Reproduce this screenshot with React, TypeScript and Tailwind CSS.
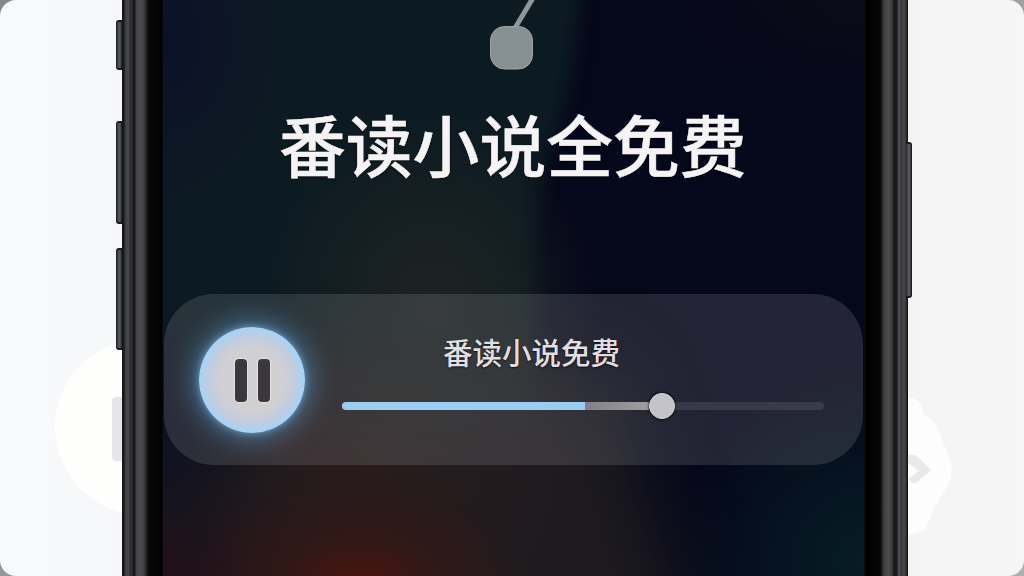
const CJK = "font-['Noto_Sans_CJK_SC','Noto_Sans',sans-serif]";

function SideButton({ className, right }: { className: string; right?: boolean }) {
  return (
    <div
      className={`w-[6px] shrink-0 border-y-2 border-[#17191c] ${
        right
          ? 'rounded-r-[3px] bg-[linear-gradient(90deg,#29292b,#626265_50%,#3a3a3d_75%,#111113)]'
          : 'rounded-l-[3px] bg-[linear-gradient(90deg,#15181b,#4a5055_40%,#55595d_65%,#1c1e20)]'
      } ${className}`}
    />
  );
}

function LeftSide() {
  return (
    <div className="relative flex h-full w-[122px] shrink-0 flex-col items-end">
      <svg className="absolute inset-0" width="122" height="576" viewBox="0 0 122 576">
        <circle cx="143" cy="427" r="88" fill="#fefefd" />
        <rect x="112" y="397" width="24" height="64" rx="4" fill="#e5e6e7" />
      </svg>
      <div className="relative flex flex-col items-end pt-5">
        <SideButton className="h-[50px]" />
        <SideButton className="mt-[51px] h-[103px]" />
        <SideButton className="mt-[24px] h-[102px]" />
      </div>
    </div>
  );
}

function RightSide() {
  return (
    <div className="relative flex h-full flex-1 flex-col items-start">
      <svg className="absolute inset-0" width="116" height="576" viewBox="908 0 116 576">
        <path
          d="M908 397 Q918 399 921 405 L923 413 Q933 419 938 429 L951 462 Q953 472 950 482 L937 503 L925 530 Q919 533 908 535Z"
          fill="#fdfdfd"
        />
        <path d="M908 455 Q914 454 918 457 L931 470 L916 483 Q911 485 909 478 L919 471 L908 463Z" fill="#e9e9ea" />
      </svg>
      <SideButton right className="relative -ml-[2px] mt-[142px] h-[156px]" />
    </div>
  );
}

function Player() {
  return (
    <div className="flex h-[171px] w-[699px] rounded-[50px] bg-[#c3bec8]/16 pl-[35px]">
      <button className="mt-[33px] flex size-[106px] items-center justify-center gap-[11px] rounded-full bg-[radial-gradient(circle_closest-side,#d0d0d3_58%,#c3cddb_80%,#a5d2f8_100%)] shadow-[0_0_28px_5px_rgba(100,175,230,0.55),0_0_7px_rgba(140,205,250,0.65)]">
        <span className="h-[43px] w-[12px] rounded-[4px] bg-[#3b383b] shadow-[0_0_1px_1px_#e4e2e5]" />
        <span className="h-[43px] w-[12px] rounded-[4px] bg-[#3b383b] shadow-[0_0_1px_1px_#e4e2e5]" />
      </button>
      <div className="ml-[37px] flex w-[482px] flex-col pt-[35px]">
        <p className={`pl-[101px] text-[29.5px] leading-[44px] font-medium whitespace-nowrap text-[#e1dfe2] [text-shadow:0_1px_2px_rgba(0,0,0,0.7)] ${CJK}`}>
          番读小说免费
        </p>
        <div className="mt-[20px] flex h-[26px] items-center">
          <div className="h-2 w-[243px] rounded-l-full bg-[#9bcdf3]" />
          <div className="h-2 w-[64px] bg-[linear-gradient(90deg,#858085,#a09ea2)]" />
          <div className="size-[26px] rounded-full border border-[#dad9de] bg-[#c4c2c9] shadow-[0_0_2px_1px_rgba(0,0,0,0.55)]" />
          <div className="h-2 flex-1 rounded-r-full bg-[#bbb8c8]/14" />
        </div>
      </div>
    </div>
  );
}

// wallpaper is built from a few overlapping soft colour pools
function Screen() {
  return (
    <div className="relative h-full w-[701px] shrink-0 overflow-hidden bg-[#05071a]">
      <svg className="absolute inset-0" width="701" height="576" viewBox="163 0 701 576">
        <defs>
          <filter id="edge" x="-20%" y="-20%" width="140%" height="140%" colorInterpolationFilters="sRGB">
            <feGaussianBlur stdDeviation="9" />
          </filter>
          <filter id="floor" x="-30%" y="-30%" width="160%" height="160%" colorInterpolationFilters="sRGB">
            <feGaussianBlur stdDeviation="36" />
          </filter>
        </defs>
        <path d="M100 -60 H584 Q576 110 545 160 Q530 220 537 330 V640 H100Z" fill="#0c1b22" filter="url(#edge)" />
        <path d="M230 370 H610 L700 660 H190Z" fill="#1d1b1f" filter="url(#floor)" />
      </svg>
      <div className="absolute inset-0 bg-[radial-gradient(130px_180px_at_0_40px,#0c1029,transparent),radial-gradient(190px_90px_at_701px_0,#0a0c17,transparent),radial-gradient(170px_200px_at_270px_310px,#1e2322,#1e232288_50%,transparent),radial-gradient(120px_120px_at_0_420px,#11101f,transparent),radial-gradient(170px_90px_at_195px_580px,#49150e,#3c161188_45%,transparent),radial-gradient(190px_180px_at_215px_480px,#2a1a1b,transparent),radial-gradient(150px_150px_at_10px_576px,#221019,transparent),radial-gradient(190px_190px_at_701px_560px,#061d25,transparent)]" />
      <div className="relative flex h-full flex-col">
        <svg className="ml-[317px] shrink-0" width="64" height="80" viewBox="480 0 64 80">
          <path d="M533 -2 L515 28" stroke="#8f9799" strokeWidth="5" />
          <rect x="490.5" y="26.5" width="42" height="42.5" rx="14" fill="#879093" stroke="#a0a6a8" />
        </svg>
        <h1 className={`mt-[13px] ml-[116px] text-[66.8px] leading-[100px] font-medium whitespace-nowrap text-[#f5f3f3] [-webkit-text-stroke:0.5px_#f5f3f3] [text-shadow:0_1px_2px_rgba(0,0,0,0.7)] ${CJK}`}>
          番读小说全免费
        </h1>
        <div className="mt-[101px] ml-px">
          <Player />
        </div>
      </div>
    </div>
  );
}

export default function App() {
  return (
    <div className="h-[576px] w-[1024px] overflow-hidden bg-[linear-gradient(135deg,#858689,#b0b0b0)]">
      <div className="flex h-full overflow-hidden rounded-[16px] bg-[linear-gradient(90deg,#f9fafb,#f5f7f9_12%,#f4f4f5_88%,#f6f6f7)]">
        <LeftSide />
        <div className="flex h-full w-[786px] shrink-0">
          <div className="h-full w-[41px] shrink-0 bg-[linear-gradient(90deg,#101012_0,#1e1e20_2px,#434447_4px,#48484a_7px,#252629_8px,#36373a_10px,#17181c_11px,#17181c_13px,#454548_14px,#4c4c4d_18px,#404041_22px,#242424_24px,#080808_27px,#010101_40px,#111118_41px)]" />
          <Screen />
          <div className="h-full flex-1 bg-[linear-gradient(90deg,#111118_0,#010101_2px,#060606_16px,#202020_18px,#404041_20px,#4e4e4f_25px,#3b3b3c_28px,#15171b_30px,#191c20_33px,#56595c_35px,#343437_37px,#4a4a4c_40px,#333335_42px,#09090b_44px)]" />
        </div>
        <RightSide />
      </div>
    </div>
  );
}
